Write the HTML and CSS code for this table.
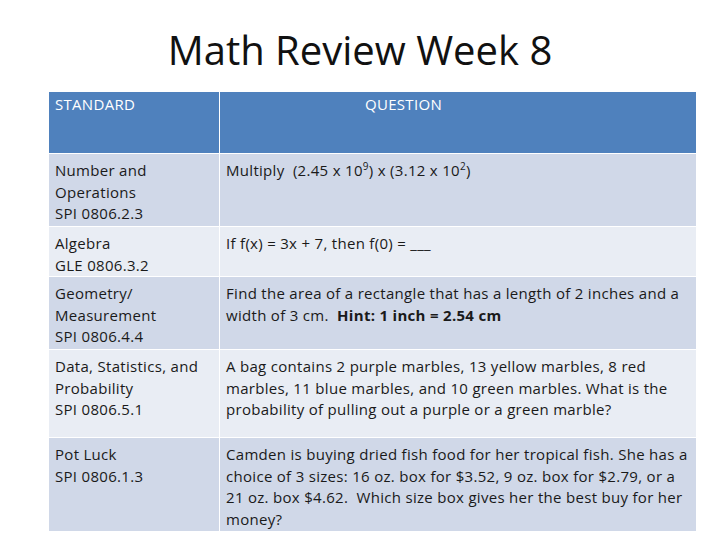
FILE: index.html
```html
<!DOCTYPE html>
<html>
<head>
<meta charset="utf-8">
<link rel="stylesheet" href="styles.css">
</head>
<body>
<div class="slide">
  <h1 class="title">Math Review Week 8</h1>
  <table class="review">
    <thead>
      <tr class="head">
        <th class="c1">STANDARD</th>
        <th class="c2 q">QUESTION</th>
      </tr>
    </thead>
    <tbody>
      <tr class="r1 odd">
        <td class="c1">Number and<br>Operations<br>SPI 0806.2.3</td>
        <td class="c2">Multiply&nbsp; (2.45 x 10<sup>9</sup>) x (3.12 x 10<sup>2</sup>)</td>
      </tr>
      <tr class="r2 even">
        <td class="c1">Algebra<br>GLE 0806.3.2</td>
        <td class="c2">If f(x) = 3x + 7, then f(0) = ___</td>
      </tr>
      <tr class="r3 odd">
        <td class="c1">Geometry/<br>Measurement<br>SPI 0806.4.4</td>
        <td class="c2">Find the area of a rectangle that has a length of 2 inches and a<br>width of 3 cm.&nbsp; <b>Hint: 1 inch = 2.54 cm</b></td>
      </tr>
      <tr class="r4 even">
        <td class="c1">Data, Statistics, and<br>Probability<br>SPI 0806.5.1</td>
        <td class="c2">A bag contains 2 purple marbles, 13 yellow marbles, 8 red<br>marbles, 11 blue marbles, and 10 green marbles. What is the<br>probability of pulling out a purple or a green marble?</td>
      </tr>
      <tr class="r5 odd">
        <td class="c1">Pot Luck<br>SPI 0806.1.3</td>
        <td class="c2">Camden is buying dried fish food for her tropical fish. She has a<br>choice of 3 sizes: 16 oz. box for $3.52, 9 oz. box for $2.79, or a<br>21 oz. box $4.62.&nbsp; Which size box gives her the best buy for her<br>money?</td>
      </tr>
    </tbody>
  </table>
</div>
</body>
</html>
```
FILE: styles.css
```css
html, body {
  margin: 0;
  padding: 0;
  background: #ffffff;
}
.slide {
  width: 720px;
  height: 540px;
  overflow: hidden;
  font-family: "Open Sans", "Liberation Sans", sans-serif;
  color: #1a1a1a;
}
.title {
  margin: 0;
  height: 91px;
  box-sizing: border-box;
  padding-top: 26px;
  text-align: center;
  font-weight: normal;
  font-size: 40px;
  line-height: 48px;
  color: #111111;
}
.review {
  margin-left: 48px;
  width: 649px;
  border-collapse: collapse;
  table-layout: fixed;
  font-size: 15px;
  letter-spacing: 0.3px;
  line-height: 21.5px;
}
.review th, .review td {
  border: 1.5px solid #ffffff;
  vertical-align: top;
  text-align: left;
  padding: 6px 0 0 6px;
  white-space: nowrap;
  overflow: hidden;
}
.review .c1 { width: 164px; }
.head th {
  background: #4f81bd;
  color: #ffffff;
  font-weight: normal;
  height: 59px;
  padding-top: 2px;
}
.head th.q { padding-left: 145px; }
.odd td { background: #d0d8e8; }
.even td { background: #e9edf4; }
.r1 td { height: 66px; }
.r2 td { height: 43px; }
.r3 td { height: 66px; }
.r4 td { height: 81px; }
.r5 td { height: 87px; }
sup {
  font-size: 10px;
  line-height: 0;
  vertical-align: 6px;
}
b { font-weight: bold; }
```
